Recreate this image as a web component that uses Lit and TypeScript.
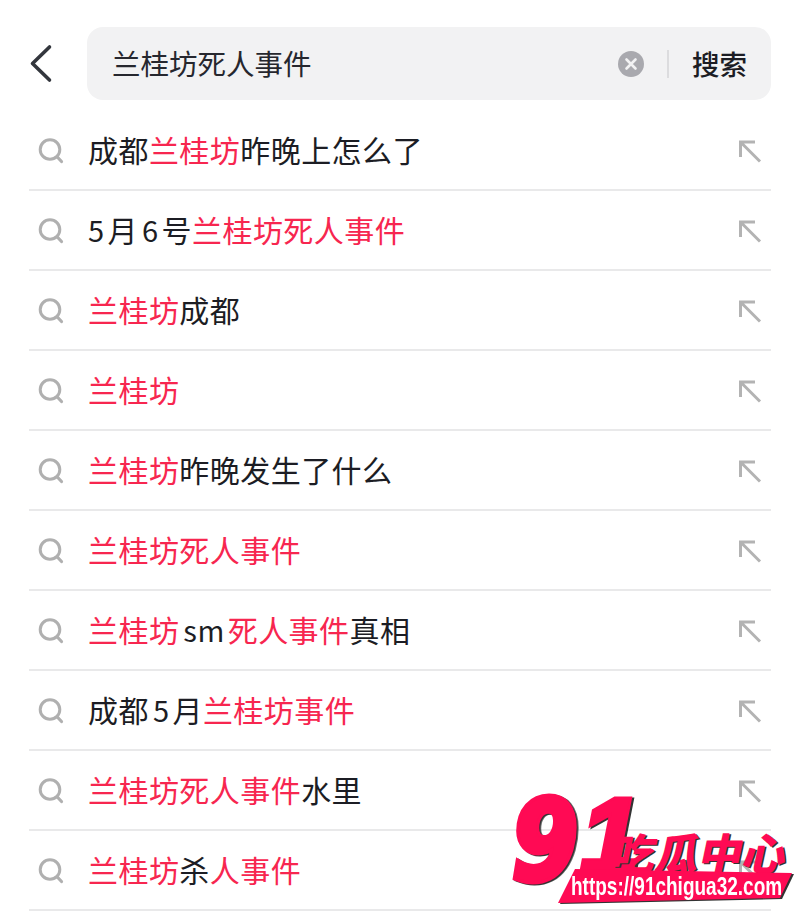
import { LitElement, html, css } from 'lit';
import { customElement } from 'lit/decorators.js';

// [text, kind]: h = red keyword, t = plain, n = latin/digit with a bit of air around it
type Seg = [string, 'h' | 't' | 'n'];

const rows: Seg[][] = [
  [['成都', 't'], ['兰桂坊', 'h'], ['昨晚上怎么了', 't']],
  [['5', 'n'], ['月', 't'], ['6', 'n'], ['号', 't'], ['兰桂坊死人事件', 'h']],
  [['兰桂坊', 'h'], ['成都', 't']],
  [['兰桂坊', 'h']],
  [['兰桂坊', 'h'], ['昨晚发生了什么', 't']],
  [['兰桂坊死人事件', 'h']],
  [['兰桂坊', 'h'], ['sm', 'n'], ['死人事件', 'h'], ['真相', 't']],
  [['成都', 't'], ['5', 'n'], ['月', 't'], ['兰桂坊事件', 'h']],
  [['兰桂坊死人事件', 'h'], ['水里', 't']],
  [['兰桂坊', 'h'], ['杀', 't'], ['人事件', 'h']],
];

@customElement('app-root')
export class AppRoot extends LitElement {
  static styles = css`
    :host {
      display: block;
      position: relative;
      width: 800px;
      height: 918px;
      overflow: hidden;
      background: #fff;
      color: #1c1d24;
      font-family: 'Noto Sans CJK SC', 'Noto Sans', sans-serif;
    }
    .head {
      display: flex;
      align-items: center;
      padding: 27px 29px 0 29px;
    }
    .back {
      width: 58px;
      height: 73px;
      flex: none;
    }
    .bar {
      flex: 1;
      height: 73px;
      display: flex;
      align-items: center;
      background: #f2f2f3;
      border-radius: 16px;
      padding: 0 24px 0 25px;
    }
    .query {
      flex: 1;
      font-size: 28.5px;
      color: #26272e;
      padding-bottom: 2px;
    }
    .clear {
      width: 26px;
      height: 26px;
      flex: none;
    }
    .sep {
      width: 2px;
      height: 28px;
      background: #dcdcde;
      margin: 0 23px 0 23px;
    }
    .go {
      font-size: 27.5px;
      font-weight: 500;
      padding-bottom: 2px;
    }
    .list {
      margin: 11px 29px 0 29px;
    }
    .row {
      display: flex;
      align-items: center;
      height: 78px;
      border-bottom: 2px solid #e9e9ea;
    }
    .mag {
      width: 59px;
      height: 78px;
      flex: none;
    }
    .txt {
      flex: 1;
      font-size: 30px;
      letter-spacing: 0.45px;
      line-height: 78px;
      padding-bottom: 2px;
      white-space: nowrap;
    }
    .h {
      color: #f7264f;
    }
    .n {
      margin: 0 3px 0 4px;
      font-size: 29px;
    }
    .n:first-child {
      margin-left: 0;
    }
    .arrow {
      width: 32px;
      height: 78px;
      flex: none;
    }
    .logo {
      position: absolute;
      left: 500px;
      top: 785px;
      width: 300px;
      height: 125px;
      color: #ff0a54;
    }
    .nine,
    .one {
      position: absolute;
      transform-origin: left top;
      paint-order: stroke fill;
      filter: drop-shadow(2px 1px 0 #333);
    }
    .nine {
      left: 12px;
      top: 12px;
      font: italic 700 110px/88px 'DejaVu Sans', sans-serif;
      -webkit-text-stroke: 7px #ff0a54;
      transform: scaleX(0.86);
    }
    .one {
      left: 80px;
      top: 11px;
      font: italic 700 108px/80px 'Liberation Sans', sans-serif;
      -webkit-text-stroke: 5px #ff0a54;
    }
    .cn {
      position: absolute;
      left: 119px;
      top: 43px;
      font-size: 43px;
      line-height: 46px;
      font-weight: 900;
      letter-spacing: 0.5px;
      white-space: nowrap;
      text-shadow: 2px 1px 0 #333;
      transform: skewX(-12deg);
      transform-origin: left top;
    }
    .strip {
      position: absolute;
      left: 58px;
      top: 84px;
      width: 234px;
      height: 36px;
      background: #333;
      clip-path: polygon(17px 0, 100% 4px, 222px 29px, 0 34px);
      transform: translate(2px, 1px);
    }
    .strip.top {
      background: #ff0a54;
      transform: none;
    }
    .url {
      position: absolute;
      left: 71px;
      top: 87px;
      font: 700 25px/28px 'Liberation Sans', sans-serif;
      color: #fff;
      white-space: nowrap;
      transform: scaleX(0.76);
      transform-origin: left top;
    }
  `;

  render() {
    return html`
      <div class="head">
        <svg class="back" viewBox="0 0 58 73">
          <path d="M20.5 20 L3.5 36.5 L20.5 53" fill="none" stroke="#33363d" stroke-width="3.6" stroke-linecap="round" stroke-linejoin="round" />
        </svg>
        <div class="bar">
          <div class="query">兰桂坊死人事件</div>
          <svg class="clear" viewBox="0 0 26 26">
            <circle cx="13" cy="13" r="13" fill="#a9a9ae" />
            <path d="M8.5 8.5 L17.5 17.5 M17.5 8.5 L8.5 17.5" stroke="#f2f2f3" stroke-width="2.6" stroke-linecap="round" />
          </svg>
          <div class="sep"></div>
          <div class="go">搜索</div>
        </div>
      </div>
      <div class="list">
        ${rows.map(
          (segs) => html`
            <div class="row">
              <svg class="mag" viewBox="0 0 59 78">
                <circle cx="21" cy="38.5" r="9.8" fill="none" stroke="#b0b0b0" stroke-width="3" />
                <path d="M28.3 46 L32.5 50.5" stroke="#b0b0b0" stroke-width="3.2" stroke-linecap="round" />
              </svg>
              <div class="txt">${segs.map(([t, k]) => html`<span class=${k}>${t}</span>`)}</div>
              <svg class="arrow" viewBox="0 0 32 78">
                <path d="M16 31 H1.5 V46 M1.5 31 L21 50.5" fill="none" stroke="#b3b3b3" stroke-width="3" />
              </svg>
            </div>
          `,
        )}
      </div>
      <div class="logo">
        <div class="nine">9</div>
        <div class="one">1</div>
        <div class="cn">吃瓜中心</div>
        <div class="strip"></div>
        <div class="strip top"></div>
        <div class="url">https://91chigua32.com</div>
      </div>
    `;
  }
}
